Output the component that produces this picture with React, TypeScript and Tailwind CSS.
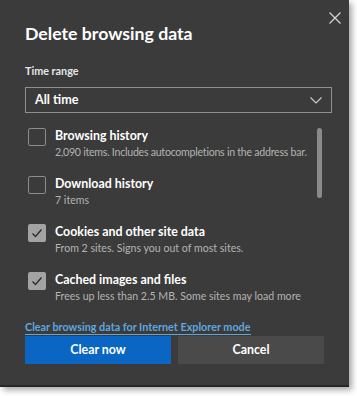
import * as React from "react";

type Item = { title: string; description: string; checked: boolean; tight?: boolean };

const items: Item[] = [
    {
        title: "Browsing history",
        description: "2,090 items. Includes autocompletions in the address bar.",
        checked: false,
        tight: true,
    },
    { title: "Download history", description: "7 items", checked: false },
    {
        title: "Cookies and other site data",
        description: "From 2 sites. Signs you out of most sites.",
        checked: true,
    },
    {
        title: "Cached images and files",
        description: "Frees up less than 2.5 MB. Some sites may load more",
        checked: true,
    },
];

const Checkbox: React.FC<{ checked: boolean }> = ({ checked }) =>
    checked ? (
        <span className="flex h-[18px] w-[18px] shrink-0 items-center justify-center rounded-[2px] bg-[#a3a3a3]">
            <svg width="12" height="12" viewBox="0 0 12 12" fill="none">
                <path d="M1.5 6.5 L4.5 9.5 L10.5 2.5" stroke="#2b2b2b" strokeWidth="1.3" />
            </svg>
        </span>
    ) : (
        <span className="h-[18px] w-[18px] shrink-0 rounded-[2px] border border-[#8c8c8c]" />
    );

export default function App() {
    return (
        <div className="h-[396px] w-[357px] bg-white font-['Lato',sans-serif]">
            <div className="relative h-[387px] w-[349px] border-b-[2px] border-[#262626] bg-[#3b3b3b] shadow-[3px_3px_6px_rgba(0,0,0,0.35)]">
                <svg className="absolute top-[12px] right-[8px]" width="12" height="12" viewBox="0 0 12 12">
                    <path d="M0.5 0.5 L11.5 11.5 M11.5 0.5 L0.5 11.5" stroke="#d6d6d6" strokeWidth="1.2" />
                </svg>
                <div className="flex flex-col px-[25px] pt-[22px]">
                    <h1 className="text-[17.7px] leading-[24px] font-bold text-white">
                        Delete browsing data
                    </h1>
                    <span className="mt-[17px] text-[10.8px] leading-[16px] font-bold text-[#e6e6e6]">
                        Time range
                    </span>
                    <div className="mt-[8px] flex h-[26px] w-[307px] items-center justify-between border border-[#8f8f8f] px-[9px]">
                        <span className="text-[12.6px] font-bold text-white">All time</span>
                        <svg width="12" height="7" viewBox="0 0 12 7" fill="none">
                            <path d="M0.5 0.5 L6 6 L11.5 0.5" stroke="#d0d0d0" strokeWidth="1.1" />
                        </svg>
                    </div>
                    <div className="relative mt-[15px] flex flex-col gap-[17px] pl-[3px]">
                        <span className="absolute top-[0px] right-[2px] h-[70px] w-[5px] rounded-full bg-[#8a8a8a]" />
                        {items.map((item) => (
                            <div key={item.title} className="flex gap-[9px]">
                                <Checkbox checked={item.checked} />
                                <div className="-mt-[1px] flex flex-col">
                                    <span className="text-[12.4px] leading-[18px] font-bold text-white">
                                        {item.title}
                                    </span>
                                    <span
                                        className={`text-[10.6px] leading-[14px] whitespace-nowrap text-[#b3b3b3] ${
                                            item.tight ? "tracking-[-0.25px]" : ""
                                        }`}
                                    >
                                        {item.description}
                                    </span>
                                </div>
                            </div>
                        ))}
                    </div>
                    <a className="mt-[17px] w-fit border-b border-[#5ea7de] text-[10.8px] leading-[14px] font-bold text-[#5ea7de]">
                        Clear browsing data for Internet Explorer mode
                    </a>
                    <div className="mt-[1px] flex gap-[7px]">
                        <button className="h-[28px] w-[150px] bg-[#0a66c2] text-[12.4px] font-bold text-white">
                            Clear now
                        </button>
                        <button className="h-[28px] w-[150px] bg-[#4a4a4a] text-[12.4px] font-bold text-white">
                            Cancel
                        </button>
                    </div>
                </div>
            </div>
        </div>
    );
}
